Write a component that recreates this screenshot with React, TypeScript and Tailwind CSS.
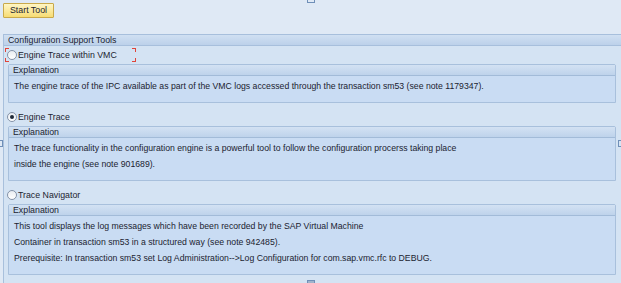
import React from 'react';

const font = { fontFamily: '"Liberation Sans", Arial, sans-serif' };

type Opt = { label: string; checked?: boolean; focus?: boolean; lines: string[] };

const options: Opt[] = [
  {
    label: 'Engine Trace within VMC',
    focus: true,
    lines: ['The engine trace of the IPC available as part of the VMC logs accessed through the transaction sm53 (see note 1179347).'],
  },
  {
    label: 'Engine Trace',
    checked: true,
    lines: [
      'The trace functionality in the configuration engine is a powerful tool to follow the configuration procerss taking place',
      'inside the engine (see note 901689).',
    ],
  },
  {
    label: 'Trace Navigator',
    lines: [
      'This tool displays the log messages which have been recorded by the SAP Virtual Machine',
      'Container in transaction sm53 in a structured way (see note 942485).',
      'Prerequisite: In transaction sm53 set Log Administration-->Log Configuration for com.sap.vmc.rfc to DEBUG.',
    ],
  },
];

const Radio: React.FC<{ checked?: boolean }> = ({ checked }) => (
  <span className="w-[10px] h-[10px] rounded-full border border-[#8593a8] bg-gradient-to-b from-[#e9edf2] to-white flex items-center justify-center shrink-0">
    {checked && <span className="w-[4px] h-[4px] rounded-full bg-[#1f2a38]" />}
  </span>
);

const Corner: React.FC<{ pos: string }> = ({ pos }) => (
  <span className={`absolute w-[4px] h-[4px] border-[#e0443a] ${pos}`} />
);

const Option: React.FC<{ opt: Opt; first?: boolean }> = ({ opt, first }) => (
  <div className={first ? 'mt-[2px]' : 'mt-[7px]'}>
    <div className="relative h-[14px] flex items-center pl-[3px] gap-[1px] w-[132px] whitespace-nowrap">
      <Radio checked={opt.checked} />
      <span className="text-[8.8px] text-[#1b2330] leading-none">{opt.label}</span>
      {opt.focus && (
        <>
          <Corner pos="left-[1px] top-0 border-l border-t" />
          <Corner pos="right-0 top-0 border-r border-t" />
          <Corner pos="left-[1px] bottom-0 border-l border-b" />
          <Corner pos="right-0 bottom-0 border-r border-b" />
        </>
      )}
    </div>
    <div className="ml-[4px] mr-[5px] mt-[2px] border border-[#a8c0dc] rounded-t-[2px] bg-[#c9dcf3]">
      <div className="h-[11px] bg-gradient-to-b from-[#d3e2f3] to-[#bed3eb] border-b border-[#a2bbd8] px-[4px] flex items-center text-[8.8px] text-[#1b2330] leading-none">
        Explanation
      </div>
      <div className="pt-[2px] pb-[8px] px-[5px] text-[8.7px] text-[#1b2330] leading-[16px]">
        {opt.lines.map((l, i) => (
          <div key={i}>{l}</div>
        ))}
      </div>
    </div>
  </div>
);

export default function App() {
  return (
    <div className="relative w-[621px] h-[283px] overflow-hidden bg-[#dfe9f5]" style={font}>
      <div className="pt-[3px] pl-[3px] flex">
        <button className="h-[15px] w-[51px] border border-[#c9a94a] rounded-[1px] bg-gradient-to-b from-[#fff6c4] to-[#f7dc72] text-[8.8px] text-[#1b2330] leading-none">
          Start Tool
        </button>
      </div>

      <div className="mt-[16px] ml-[3px] border-l border-[#a8c0dc] bg-[#d4e3f3] h-[250px]">
        <div className="h-[12px] bg-gradient-to-b from-[#d0e0f2] to-[#bcd1ea] border-y border-[#a7bfdc] px-[4px] flex items-center text-[8.8px] text-[#1b2330] leading-none">
          Configuration Support Tools
        </div>
        {options.map((o, i) => (
          <Option key={o.label} opt={o} first={i === 0} />
        ))}
      </div>

      <span className="absolute left-[307px] top-0 w-[8px] h-[3px] border border-t-0 border-[#6f8fb8] bg-[#dfe9f5]" />
      <span className="absolute left-[307px] bottom-0 w-[8px] h-[3px] border border-b-0 border-[#6f8fb8] bg-[#9fb4cc]" />
      <span className="absolute left-0 top-[140px] w-[3px] h-[7px] border border-l-0 border-[#6f8fb8]" />
      <span className="absolute right-0 top-[140px] w-[3px] h-[7px] border border-r-0 border-[#6f8fb8]" />
    </div>
  );
}
